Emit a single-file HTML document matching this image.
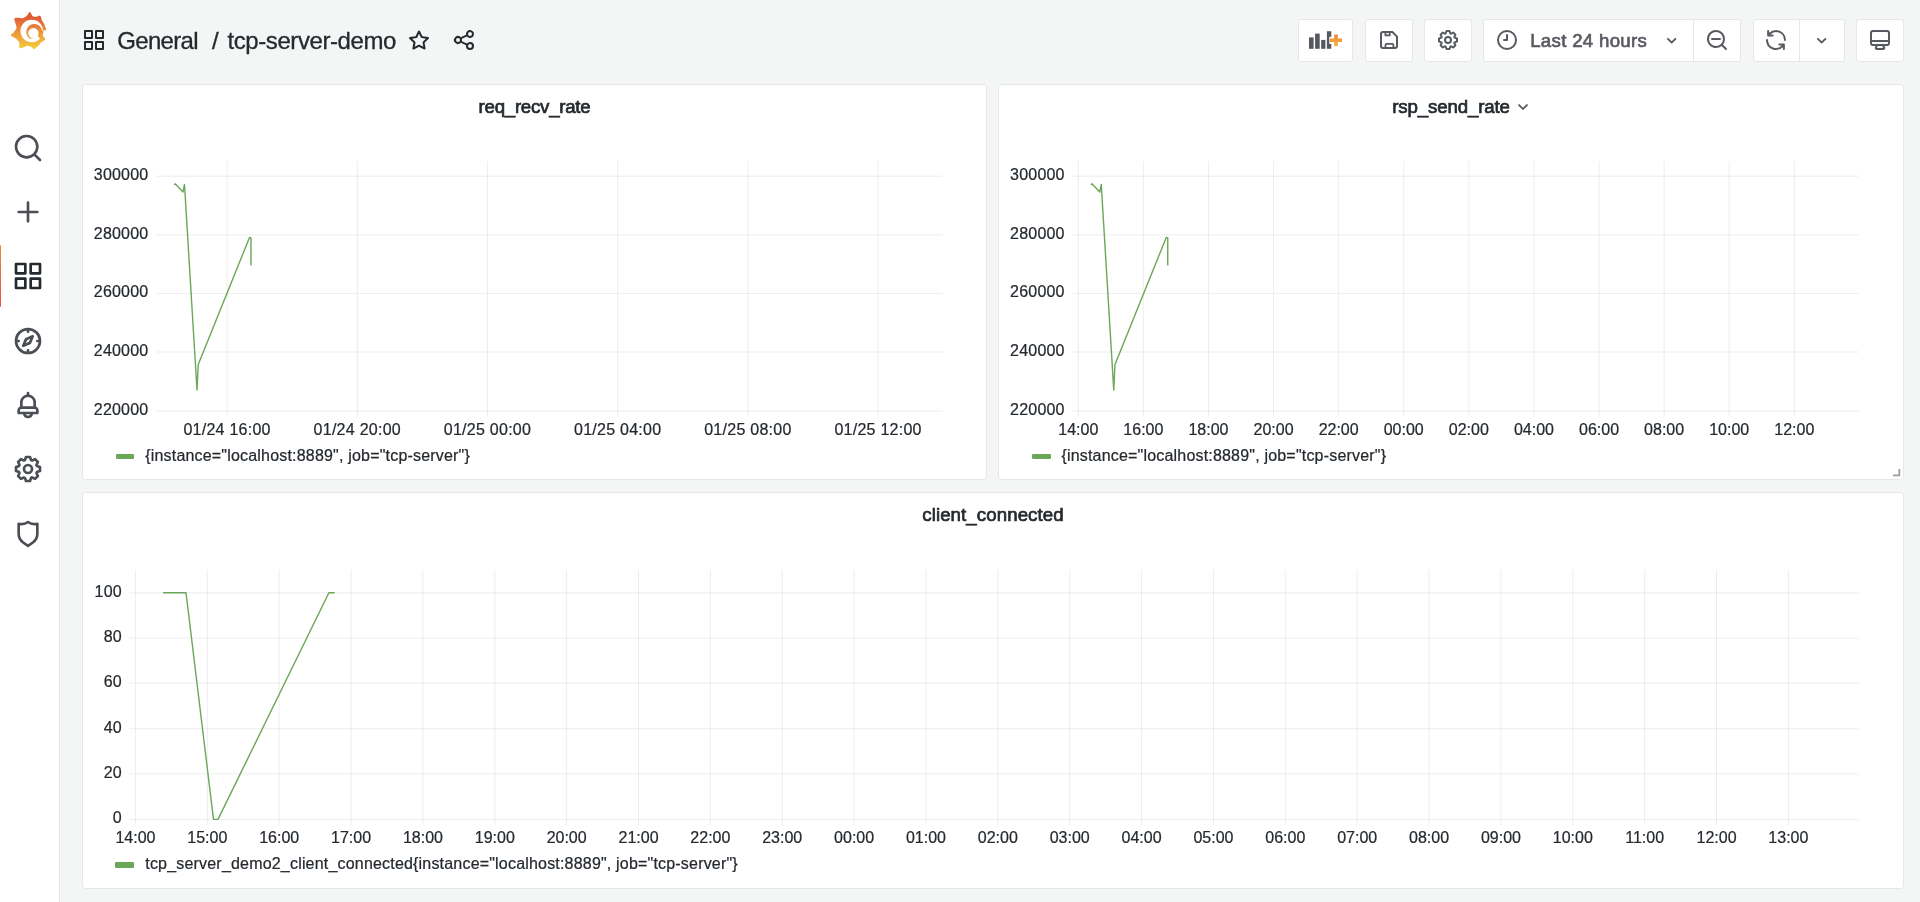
<!DOCTYPE html>
<html lang="en"><head><meta charset="utf-8"><title>tcp-server-demo - Grafana</title>
<style>
*{box-sizing:border-box;margin:0;padding:0}
html,body{width:1920px;height:902px;overflow:hidden}
body{background:#f4f5f5;font-family:"Liberation Sans",Arial,sans-serif;color:#24292e;position:relative}
.ic{position:absolute;display:block;overflow:visible}
#side{position:absolute;left:0;top:0;width:60px;height:902px;background:#fff;border-right:1px solid #e4e5e7}
#side .active{position:absolute;left:-1px;top:244.8px;width:2.3px;height:62.3px;border-radius:1.5px;background:linear-gradient(#f2873b,#e8504c)}
#nav{position:absolute;left:60px;top:0;right:0;height:81px;will-change:transform}
.t{position:absolute;white-space:pre;line-height:1}
.title{font-size:24px;top:28.6px;-webkit-text-stroke:0.3px #24292e}
.btn{position:absolute;top:19px;height:42.6px;background:#fff;border:1px solid #e5e6e8;border-radius:3px}
.panel{position:absolute;will-change:transform;background:#fff;border:1px solid #e5e6e8;border-radius:3.5px}
.panel svg.chart{position:absolute;left:-1px;top:-1px;overflow:visible}
.ptitle{position:absolute;left:0;right:0;top:10.5px;text-align:center;font-size:18.67px;line-height:21px;white-space:pre;letter-spacing:-0.25px;-webkit-text-stroke:0.7px #24292e}
.legend{position:absolute;font-size:16px;line-height:18px;white-space:pre;letter-spacing:0.19px;-webkit-text-stroke:0.22px #24292e}
.sw{position:absolute;width:18.7px;height:5.3px;border-radius:1.3px;background:#6ba659}
svg text{font-family:"Liberation Sans",Arial,sans-serif;font-size:16px;fill:#24292e;stroke:#24292e;stroke-width:0.22px}
</style></head><body>

<div id="side">
<svg class="ic" style="left:0;top:0" width="60" height="60" viewBox="0 0 900 900"><defs><linearGradient id="lg" gradientUnits="userSpaceOnUse" x1="0" y1="180" x2="0" y2="736"><stop offset="0.15" stop-color="#e05c36"/><stop offset="0.55" stop-color="#ec963b"/><stop offset="1" stop-color="#f6cd3d"/></linearGradient></defs>
<path fill="url(#lg)" d="M445 180C463 176 457 192 472 212C487 232 473 234 495 245C517 256 516 252 545 250C574 248 571 234 592 238C613 242 606 243 616 262C626 281 614 275 626 300C638 325 639 315 655 345C671 375 668 369 678 400C688 431 700 428 690 447C680 466 659 446 644 462C629 478 640 475 641 500C642 525 638 520 648 545C658 570 674 565 676 585C678 605 674 596 655 612C636 628 632 622 612 640C592 658 606 653 590 672C574 691 584 683 560 702C536 721 534 733 510 736C486 739 501 725 480 712C459 699 464 699 440 692C416 685 427 684 400 690C373 696 380 702 350 712C320 722 318 729 300 722C282 715 292 712 289 690C286 668 296 673 290 650C284 627 288 635 270 612C252 589 262 598 230 572C198 546 174 552 165 527C156 502 178 516 200 490C222 464 224 467 238 440C252 413 249 433 245 400C241 367 234 367 226 330C218 293 207 297 220 278C233 259 237 270 270 268C303 266 296 277 330 272C364 267 360 264 385 250C410 236 394 246 412 225C430 204 427 184 445 180Z"/>
<circle cx="476" cy="466" r="169" fill="#fff"/>
<path fill="url(#lg)" d="M450 583A121 121 0 1 1 601 564L563 544A78 78 0 1 0 521 573Z"/>
<path fill="none" stroke="url(#lg)" stroke-width="26" d="M638 458A162 162 0 0 1 594 576"/></svg>
<div class="active"></div>
<svg class="ic" style="left:12.20px;top:131.50px" width="32" height="32" viewBox="0 0 24 24" fill="#4b4e55"><path d="M21.71,20.29,18,16.61A9,9,0,1,0,16.61,18l3.68,3.68a1,1,0,0,0,1.42,0A1,1,0,0,0,21.71,20.29ZM11,18a7,7,0,1,1,7-7A7,7,0,0,1,11,18Z"/></svg>
<svg class="ic" style="left:12.20px;top:196.00px" width="32" height="32" viewBox="0 0 24 24" fill="#4b4e55"><path d="M19,11H13V5a1,1,0,0,0-2,0v6H5a1,1,0,0,0,0,2h6v6a1,1,0,0,0,2,0V13h6a1,1,0,0,0,0-2Z"/></svg>
<svg class="ic" style="left:12.20px;top:260.20px" width="32" height="32" viewBox="0 0 24 24" fill="#24292e"><path d="M10,13H3a1,1,0,0,0-1,1v7a1,1,0,0,0,1,1h7a1,1,0,0,0,1-1V14A1,1,0,0,0,10,13ZM9,20H4V15H9ZM21,2H14a1,1,0,0,0-1,1v7a1,1,0,0,0,1,1h7a1,1,0,0,0,1-1V3A1,1,0,0,0,21,2ZM20,9H15V4h5Zm1,4H14a1,1,0,0,0-1,1v7a1,1,0,0,0,1,1h7a1,1,0,0,0,1-1V14A1,1,0,0,0,21,13Zm-1,7H15V15h5ZM10,2H3A1,1,0,0,0,2,3v7a1,1,0,0,0,1,1h7a1,1,0,0,0,1-1V3A1,1,0,0,0,10,2ZM9,9H4V4H9Z"/></svg>
<svg class="ic" style="left:12.20px;top:324.70px" width="32" height="32" viewBox="0 0 24 24" fill="#4b4e55"><path d="M12,2A10,10,0,1,0,22,12,10,10,0,0,0,12,2Zm1,17.93V19a1,1,0,0,0-2,0v.93A8,8,0,0,1,4.07,13H5a1,1,0,0,0,0-2H4.07A8,8,0,0,1,11,4.07V5a1,1,0,0,0,2,0V4.07A8,8,0,0,1,19.93,11H19a1,1,0,0,0,0,2h.93A8,8,0,0,1,13,19.93ZM15.14,7.55l-5,2.12a1,1,0,0,0-.52.52l-2.12,5a1,1,0,0,0,.21,1.1,1,1,0,0,0,.7.29.93.93,0,0,0,.4-.08l5-2.12a1,1,0,0,0,.52-.52l2.12-5a1,1,0,0,0-1.31-1.31Zm-2.49,5.1-2.28,1,1-2.28,2.28-1Z"/></svg>
<svg class="ic" style="left:12.20px;top:389.00px" width="32" height="32" viewBox="0 0 24 24" fill="#4b4e55"><path d="M18,13.18V10a6,6,0,0,0-5-5.91V3a1,1,0,0,0-2,0V4.09A6,6,0,0,0,6,10v3.18A3,3,0,0,0,4,16v2a1,1,0,0,0,1,1H8.14a4,4,0,0,0,7.72,0H19a1,1,0,0,0,1-1V16A3,3,0,0,0,18,13.18ZM8,10a4,4,0,0,1,8,0v3H8Zm4,10a2,2,0,0,1-1.72-1h3.44A2,2,0,0,1,12,20Zm6-3H6V16a1,1,0,0,1,1-1H17a1,1,0,0,1,1,1Z"/></svg>
<svg class="ic" style="left:12.20px;top:453.30px" width="32" height="32" viewBox="0 0 24 24" fill="#4b4e55"><path d="M21.32,9.55l-1.89-.63.89-1.78A1,1,0,0,0,20.13,6L18,3.87a1,1,0,0,0-1.15-.19l-1.78.89-.63-1.89A1,1,0,0,0,13.5,2h-3a1,1,0,0,0-.95.68L8.92,4.57,7.14,3.68A1,1,0,0,0,6,3.87L3.87,6a1,1,0,0,0-.19,1.15l.89,1.78-1.89.63A1,1,0,0,0,2,10.5v3a1,1,0,0,0,.68.95l1.89.63-.89,1.78A1,1,0,0,0,3.87,18L6,20.13a1,1,0,0,0,1.15.19l1.78-.89.63,1.89a1,1,0,0,0,.95.68h3a1,1,0,0,0,.95-.68l.63-1.89,1.78.89A1,1,0,0,0,18,20.13L20.13,18a1,1,0,0,0,.19-1.15l-.89-1.78,1.89-.63A1,1,0,0,0,22,13.5v-3A1,1,0,0,0,21.32,9.55ZM20,12.78l-1.2.4A2,2,0,0,0,17.64,16l.57,1.14-1.1,1.1L16,17.64a2,2,0,0,0-2.79,1.16l-.4,1.2H11.22l-.4-1.2A2,2,0,0,0,8,17.64l-1.14.57-1.1-1.1L6.36,16A2,2,0,0,0,5.2,13.18L4,12.78V11.22l1.2-.4A2,2,0,0,0,6.36,8L5.79,6.89l1.1-1.1L8,6.36A2,2,0,0,0,10.82,5.2l.4-1.2h1.56l.4,1.2A2,2,0,0,0,16,6.36l1.14-.57,1.1,1.1L17.64,8a2,2,0,0,0,1.16,2.79l1.2.4ZM12,8a4,4,0,1,0,4,4A4,4,0,0,0,12,8Zm0,6a2,2,0,1,1,2-2A2,2,0,0,1,12,14Z"/></svg>
<svg class="ic" style="left:12.20px;top:517.50px" width="32" height="32" viewBox="0 0 24 24" fill="#4b4e55"><path d="M19.63,3.65a1,1,0,0,0-.84-.2,8,8,0,0,1-6.22-1.27,1,1,0,0,0-1.14,0A8,8,0,0,1,5.21,3.45a1,1,0,0,0-.84.2A1,1,0,0,0,4,4.43v7.45a9,9,0,0,0,3.77,7.33l3.65,2.6a1,1,0,0,0,1.16,0l3.65-2.6A9,9,0,0,0,20,11.88V4.43A1,1,0,0,0,19.63,3.65ZM18,11.88a7,7,0,0,1-2.93,5.7L12,19.77,8.93,17.58A7,7,0,0,1,6,11.88V5.58a10,10,0,0,0,6-1.39,10,10,0,0,0,6,1.39Z"/></svg>
</div>
<div id="nav">
<svg class="ic" style="left:22.00px;top:28.10px" width="24" height="24" viewBox="0 0 24 24" fill="#24292e"><path d="M10,13H3a1,1,0,0,0-1,1v7a1,1,0,0,0,1,1h7a1,1,0,0,0,1-1V14A1,1,0,0,0,10,13ZM9,20H4V15H9ZM21,2H14a1,1,0,0,0-1,1v7a1,1,0,0,0,1,1h7a1,1,0,0,0,1-1V3A1,1,0,0,0,21,2ZM20,9H15V4h5Zm1,4H14a1,1,0,0,0-1,1v7a1,1,0,0,0,1,1h7a1,1,0,0,0,1-1V14A1,1,0,0,0,21,13Zm-1,7H15V15h5ZM10,2H3A1,1,0,0,0,2,3v7a1,1,0,0,0,1,1h7a1,1,0,0,0,1-1V3A1,1,0,0,0,10,2ZM9,9H4V4H9Z"/></svg>
<span class="t title" style="left:57.3px;letter-spacing:-0.68px">General</span>
<span class="t title" style="left:151.9px">/</span>
<span class="t title" style="left:167.5px;letter-spacing:-0.42px">tcp-server-demo</span>
<svg class="ic" style="left:346.80px;top:28.30px" width="24" height="24" viewBox="0 0 24 24" fill="#24292e"><path d="M22,9.67A1,1,0,0,0,21.14,9l-5.69-.83L12.9,3a1,1,0,0,0-1.8,0L8.55,8.16,2.86,9a1,1,0,0,0-.81.68,1,1,0,0,0,.25,1l4.13,4-1,5.68A1,1,0,0,0,6.9,21.44L12,18.77l5.1,2.67a.93.93,0,0,0,.46.12,1,1,0,0,0,.59-.19,1,1,0,0,0,.4-1l-1-5.68,4.13-4A1,1,0,0,0,22,9.67Zm-6.15,4a1,1,0,0,0-.29.88l.72,4.2-3.76-2a1.06,1.06,0,0,0-.94,0l-3.76,2,.72-4.2a1,1,0,0,0-.29-.88l-3-3,4.21-.61a1,1,0,0,0,.76-.55L12,5.7l1.88,3.82a1,1,0,0,0,.76.55l4.21.61Z"/></svg>
<svg class="ic" style="left:392.20px;top:28.20px" width="24" height="24" viewBox="0 0 24 24" fill="#24292e"><path d="M18,14a4,4,0,0,0-3.08,1.48l-5.1-2.35a3.64,3.64,0,0,0,0-2.26l5.1-2.35A4,4,0,1,0,14,6a4.17,4.17,0,0,0,.07.71L8.79,9.14a4,4,0,1,0,0,5.72l5.28,2.43A4.17,4.17,0,0,0,14,18a4,4,0,1,0,4-4ZM18,4a2,2,0,1,1-2,2A2,2,0,0,1,18,4ZM6,14a2,2,0,1,1,2-2A2,2,0,0,1,6,14Zm12,6a2,2,0,1,1,2-2A2,2,0,0,1,18,20Z"/></svg>
<div class="btn" style="left:1238.0px;width:55.4px"></div>
<div class="btn" style="left:1305.0px;width:47.6px"></div>
<div class="btn" style="left:1364.0px;width:47.7px"></div>
<div class="btn" style="left:1423.0px;width:258.1px"></div>
<div class="btn" style="left:1692.7px;width:91.9px"></div>
<div class="btn" style="left:1796.0px;width:47.7px"></div>
<div style="position:absolute;left:1633.3px;top:20px;width:1px;height:40.6px;background:#e5e6e8"></div>
<div style="position:absolute;left:1739.3px;top:20px;width:1px;height:40.6px;background:#e5e6e8"></div>
<svg class="ic" style="left:1249px;top:31px" width="34" height="19" viewBox="0 0 34 19">
<rect x="0" y="6.4" width="4.6" height="11.4" fill="#55585f"/><rect x="6.1" y="2.6" width="4.6" height="15.2" fill="#55585f"/>
<rect x="12.2" y="8.9" width="4.2" height="8.9" fill="#55585f"/><path d="M17.9 0.3h4.4v5.4h-2v7.2h2v4.9h-4.4z" fill="#55585f"/>
<defs><linearGradient id="pg" x1="0" y1="0" x2="0" y2="1"><stop offset="0" stop-color="#f0813a"/><stop offset="1" stop-color="#f5b73a"/></linearGradient></defs>
<path d="M25.2 3.4h3.6v4.2h4.2v3.4h-4.2v4.2h-3.6v-4.2h-4.2v-3.4h4.2z" fill="url(#pg)"/></svg>
<svg class="ic" style="left:1316.80px;top:28.20px" width="24" height="24" viewBox="0 0 24 24"><g fill="none" stroke="#585a61" stroke-width="2" stroke-linejoin="round"><path d="M6 4h9.4L20 8.6V18a2 2 0 0 1-2 2H6a2 2 0 0 1-2-2V6a2 2 0 0 1 2-2z"/><path stroke-width="1.8" d="M8.4 4.4v3h4.3V4.4M8.5 19.6v-2.7a1 1 0 0 1 1-1h5.9a1 1 0 0 1 1 1v2.7"/></g></svg>
<svg class="ic" style="left:1375.70px;top:28.10px" width="24" height="24" viewBox="0 0 24 24" fill="#585a61"><path d="M21.32,9.55l-1.89-.63.89-1.78A1,1,0,0,0,20.13,6L18,3.87a1,1,0,0,0-1.15-.19l-1.78.89-.63-1.89A1,1,0,0,0,13.5,2h-3a1,1,0,0,0-.95.68L8.92,4.57,7.14,3.68A1,1,0,0,0,6,3.87L3.87,6a1,1,0,0,0-.19,1.15l.89,1.78-1.89.63A1,1,0,0,0,2,10.5v3a1,1,0,0,0,.68.95l1.89.63-.89,1.78A1,1,0,0,0,3.87,18L6,20.13a1,1,0,0,0,1.15.19l1.78-.89.63,1.89a1,1,0,0,0,.95.68h3a1,1,0,0,0,.95-.68l.63-1.89,1.78.89A1,1,0,0,0,18,20.13L20.13,18a1,1,0,0,0,.19-1.15l-.89-1.78,1.89-.63A1,1,0,0,0,22,13.5v-3A1,1,0,0,0,21.32,9.55ZM20,12.78l-1.2.4A2,2,0,0,0,17.64,16l.57,1.14-1.1,1.1L16,17.64a2,2,0,0,0-2.79,1.16l-.4,1.2H11.22l-.4-1.2A2,2,0,0,0,8,17.64l-1.14.57-1.1-1.1L6.36,16A2,2,0,0,0,5.2,13.18L4,12.78V11.22l1.2-.4A2,2,0,0,0,6.36,8L5.79,6.89l1.1-1.1L8,6.36A2,2,0,0,0,10.82,5.2l.4-1.2h1.56l.4,1.2A2,2,0,0,0,16,6.36l1.14-.57,1.1,1.1L17.64,8a2,2,0,0,0,1.16,2.79l1.2.4ZM12,8a4,4,0,1,0,4,4A4,4,0,0,0,12,8Zm0,6a2,2,0,1,1,2-2A2,2,0,0,1,12,14Z"/></svg>
<svg class="ic" style="left:1434.70px;top:28.05px" width="24" height="24" viewBox="0 0 24 24" fill="#585a61"><path d="M12,2A10,10,0,1,0,22,12,10,10,0,0,0,12,2Zm0,18a8,8,0,1,1,8-8A8,8,0,0,1,12,20ZM12,6a1,1,0,0,0-1,1v4H9a1,1,0,0,0,0,2h3a1,1,0,0,0,1-1V7A1,1,0,0,0,12,6Z"/></svg>
<span class="t" style="left:1470.2px;top:31.7px;font-size:18.67px;letter-spacing:0.3px;color:#585a61;-webkit-text-stroke:0.65px #585a61">Last 24 hours</span>
<svg class="ic" style="left:1601.15px;top:29.75px" width="21.3" height="21.3" viewBox="0 0 24 24" fill="#585a61"><path d="M17,9.17a1,1,0,0,0-1.41,0L12,12.71,8.46,9.17a1,1,0,0,0-1.41,0,1,1,0,0,0,0,1.42l4.24,4.24a1,1,0,0,0,1.42,0L17,10.59A1,1,0,0,0,17,9.17Z"/></svg>
<svg class="ic" style="left:1645.40px;top:28.10px" width="24" height="24" viewBox="0 0 24 24" fill="#585a61"><path d="M21.71,20.29,18,16.61A9,9,0,1,0,16.61,18l3.68,3.68a1,1,0,0,0,1.42,0A1,1,0,0,0,21.71,20.29ZM11,18a7,7,0,1,1,7-7A7,7,0,0,1,11,18Zm4-8H7a1,1,0,0,0,0,2h8a1,1,0,0,0,0-2Z"/></svg>
<svg class="ic" style="left:1704.30px;top:28.30px" width="24" height="24" viewBox="0 0 24 24" fill="#585a61"><path d="M19.91,15.51H15.38a1,1,0,0,0,0,2h2.4A8,8,0,0,1,4,12a1,1,0,0,0-2,0,10,10,0,0,0,16.88,7.23V21a1,1,0,0,0,2,0V16.5A1,1,0,0,0,19.91,15.51ZM12,2A10,10,0,0,0,5.12,4.77V3a1,1,0,0,0-2,0V7.5a1,1,0,0,0,1,1h4.5a1,1,0,0,0,0-2H6.22A8,8,0,0,1,20,12a1,1,0,0,0,2,0A10,10,0,0,0,12,2Z"/></svg>
<svg class="ic" style="left:1751.45px;top:29.55px" width="21.3" height="21.3" viewBox="0 0 24 24" fill="#585a61"><path d="M17,9.17a1,1,0,0,0-1.41,0L12,12.71,8.46,9.17a1,1,0,0,0-1.41,0,1,1,0,0,0,0,1.42l4.24,4.24a1,1,0,0,0,1.42,0L17,10.59A1,1,0,0,0,17,9.17Z"/></svg>
<svg class="ic" style="left:1807.90px;top:28.10px" width="24" height="24" viewBox="0 0 24 24" fill="#585a61"><path d="M19,2H5A3,3,0,0,0,2,5V15a3,3,0,0,0,3,3H7.64l-.58,1a2,2,0,0,0,0,2,2,2,0,0,0,1.75,1h6.46A2,2,0,0,0,17,21a2,2,0,0,0,0-2l-.59-1H19a3,3,0,0,0,3-3V5A3,3,0,0,0,19,2ZM8.77,20,10,18H14l1.2,2ZM20,15a1,1,0,0,1-1,1H5a1,1,0,0,1-1-1V14H20Zm0-3H4V5A1,1,0,0,1,5,4H19a1,1,0,0,1,1,1Z"/></svg>
</div>
<div class="panel" style="left:82px;top:84px;width:905px;height:396px">
<div class="ptitle" style="letter-spacing:-0.25px">req_recv_rate</div>
<svg class="chart" width="905" height="396" viewBox="82 84 905 396"><g stroke="#1e2832" stroke-opacity="0.085" stroke-width="0.95"><line x1="156.00" y1="176.25" x2="942.30" y2="176.25"/><line x1="156.00" y1="234.80" x2="942.30" y2="234.80"/><line x1="156.00" y1="293.40" x2="942.30" y2="293.40"/><line x1="156.00" y1="352.00" x2="942.30" y2="352.00"/><line x1="156.00" y1="411.00" x2="942.30" y2="411.00"/><line x1="227.10" y1="161.30" x2="227.10" y2="416.50"/><line x1="357.30" y1="161.30" x2="357.30" y2="416.50"/><line x1="487.50" y1="161.30" x2="487.50" y2="416.50"/><line x1="617.70" y1="161.30" x2="617.70" y2="416.50"/><line x1="747.90" y1="161.30" x2="747.90" y2="416.50"/><line x1="878.10" y1="161.30" x2="878.10" y2="416.50"/></g><g text-anchor="end" letter-spacing="0.2"><text x="148.40" y="180.05">300000</text><text x="148.40" y="238.60">280000</text><text x="148.40" y="297.20">260000</text><text x="148.40" y="355.80">240000</text><text x="148.40" y="414.80">220000</text></g><g text-anchor="middle" letter-spacing="0.26"><text x="227.10" y="434.90">01/24 16:00</text><text x="357.30" y="434.90">01/24 20:00</text><text x="487.50" y="434.90">01/25 00:00</text><text x="617.70" y="434.90">01/25 04:00</text><text x="747.90" y="434.90">01/25 08:00</text><text x="878.10" y="434.90">01/25 12:00</text></g><polyline points="174.30,185.00 175.20,183.80 183.00,192.00 184.50,184.50 197.00,390.00 198.25,364.50 249.50,237.50 251.00,238.00 251.00,265.50" fill="none" stroke="#6ba659" stroke-width="1.4" stroke-linejoin="round"/></svg>
<div class="sw" style="left:32.50px;top:368.90px"></div>
<div class="legend" style="left:62.20px;top:361.80px">{instance="localhost:8889", job="tcp-server"}</div>

</div>
<div class="panel" style="left:998px;top:84px;width:906px;height:396px">
<div class="ptitle" style="letter-spacing:-0.12px">rsp_send_rate</div><svg class="ic" style="left:512.90px;top:10.90px" width="22" height="22" viewBox="0 0 24 24" fill="#54575d"><path d="M17,9.17a1,1,0,0,0-1.41,0L12,12.71,8.46,9.17a1,1,0,0,0-1.41,0,1,1,0,0,0,0,1.42l4.24,4.24a1,1,0,0,0,1.42,0L17,10.59A1,1,0,0,0,17,9.17Z"/></svg>
<svg class="chart" width="906" height="396" viewBox="998 84 906 396"><g stroke="#1e2832" stroke-opacity="0.085" stroke-width="0.95"><line x1="1072.30" y1="176.25" x2="1858.60" y2="176.25"/><line x1="1072.30" y1="234.80" x2="1858.60" y2="234.80"/><line x1="1072.30" y1="293.40" x2="1858.60" y2="293.40"/><line x1="1072.30" y1="352.00" x2="1858.60" y2="352.00"/><line x1="1072.30" y1="411.00" x2="1858.60" y2="411.00"/><line x1="1078.30" y1="161.30" x2="1078.30" y2="416.50"/><line x1="1143.39" y1="161.30" x2="1143.39" y2="416.50"/><line x1="1208.48" y1="161.30" x2="1208.48" y2="416.50"/><line x1="1273.57" y1="161.30" x2="1273.57" y2="416.50"/><line x1="1338.66" y1="161.30" x2="1338.66" y2="416.50"/><line x1="1403.75" y1="161.30" x2="1403.75" y2="416.50"/><line x1="1468.84" y1="161.30" x2="1468.84" y2="416.50"/><line x1="1533.93" y1="161.30" x2="1533.93" y2="416.50"/><line x1="1599.02" y1="161.30" x2="1599.02" y2="416.50"/><line x1="1664.11" y1="161.30" x2="1664.11" y2="416.50"/><line x1="1729.20" y1="161.30" x2="1729.20" y2="416.50"/><line x1="1794.29" y1="161.30" x2="1794.29" y2="416.50"/></g><g text-anchor="end" letter-spacing="0.2"><text x="1064.70" y="180.05">300000</text><text x="1064.70" y="238.60">280000</text><text x="1064.70" y="297.20">260000</text><text x="1064.70" y="355.80">240000</text><text x="1064.70" y="414.80">220000</text></g><g text-anchor="middle" letter-spacing="0"><text x="1078.30" y="434.90">14:00</text><text x="1143.39" y="434.90">16:00</text><text x="1208.48" y="434.90">18:00</text><text x="1273.57" y="434.90">20:00</text><text x="1338.66" y="434.90">22:00</text><text x="1403.75" y="434.90">00:00</text><text x="1468.84" y="434.90">02:00</text><text x="1533.93" y="434.90">04:00</text><text x="1599.02" y="434.90">06:00</text><text x="1664.11" y="434.90">08:00</text><text x="1729.20" y="434.90">10:00</text><text x="1794.29" y="434.90">12:00</text></g><polyline points="1091.05,185.00 1091.95,183.80 1099.75,192.00 1101.25,184.50 1113.75,390.00 1115.00,364.50 1166.25,237.50 1167.75,238.00 1167.75,265.50" fill="none" stroke="#6ba659" stroke-width="1.4" stroke-linejoin="round"/></svg>
<div class="sw" style="left:33.00px;top:368.90px"></div>
<div class="legend" style="left:62.40px;top:361.80px">{instance="localhost:8889", job="tcp-server"}</div>
<svg class="ic" style="left:892.5px;top:382.5px" width="9" height="9" viewBox="0 0 9 9"><path d="M7.3 1v6.3H1" fill="none" stroke="#9a9da3" stroke-width="1.8"/></svg>
</div>
<div class="panel" style="left:82px;top:491.5px;width:1822px;height:396.5px">
<div class="ptitle" style="letter-spacing:0.09px">client_connected</div>
<svg class="chart" width="1822" height="396.5" viewBox="82 491.5 1822 396.5"><g stroke="#1e2832" stroke-opacity="0.085" stroke-width="0.95"><line x1="129.45" y1="592.30" x2="1858.60" y2="592.30"/><line x1="129.45" y1="637.50" x2="1858.60" y2="637.50"/><line x1="129.45" y1="682.60" x2="1858.60" y2="682.60"/><line x1="129.45" y1="728.20" x2="1858.60" y2="728.20"/><line x1="129.45" y1="773.40" x2="1858.60" y2="773.40"/><line x1="129.45" y1="819.00" x2="1858.60" y2="819.00"/><line x1="135.45" y1="569.20" x2="135.45" y2="824.50"/><line x1="207.32" y1="569.20" x2="207.32" y2="824.50"/><line x1="279.18" y1="569.20" x2="279.18" y2="824.50"/><line x1="351.05" y1="569.20" x2="351.05" y2="824.50"/><line x1="422.92" y1="569.20" x2="422.92" y2="824.50"/><line x1="494.79" y1="569.20" x2="494.79" y2="824.50"/><line x1="566.65" y1="569.20" x2="566.65" y2="824.50"/><line x1="638.52" y1="569.20" x2="638.52" y2="824.50"/><line x1="710.39" y1="569.20" x2="710.39" y2="824.50"/><line x1="782.25" y1="569.20" x2="782.25" y2="824.50"/><line x1="854.12" y1="569.20" x2="854.12" y2="824.50"/><line x1="925.99" y1="569.20" x2="925.99" y2="824.50"/><line x1="997.85" y1="569.20" x2="997.85" y2="824.50"/><line x1="1069.72" y1="569.20" x2="1069.72" y2="824.50"/><line x1="1141.59" y1="569.20" x2="1141.59" y2="824.50"/><line x1="1213.46" y1="569.20" x2="1213.46" y2="824.50"/><line x1="1285.32" y1="569.20" x2="1285.32" y2="824.50"/><line x1="1357.19" y1="569.20" x2="1357.19" y2="824.50"/><line x1="1429.06" y1="569.20" x2="1429.06" y2="824.50"/><line x1="1500.92" y1="569.20" x2="1500.92" y2="824.50"/><line x1="1572.79" y1="569.20" x2="1572.79" y2="824.50"/><line x1="1644.66" y1="569.20" x2="1644.66" y2="824.50"/><line x1="1716.52" y1="569.20" x2="1716.52" y2="824.50"/><line x1="1788.39" y1="569.20" x2="1788.39" y2="824.50"/></g><g text-anchor="end" letter-spacing="0.2"><text x="121.85" y="596.10">100</text><text x="121.85" y="641.30">80</text><text x="121.85" y="686.40">60</text><text x="121.85" y="732.00">40</text><text x="121.85" y="777.20">20</text><text x="121.85" y="822.80">0</text></g><g text-anchor="middle" letter-spacing="0"><text x="135.45" y="842.90">14:00</text><text x="207.32" y="842.90">15:00</text><text x="279.18" y="842.90">16:00</text><text x="351.05" y="842.90">17:00</text><text x="422.92" y="842.90">18:00</text><text x="494.79" y="842.90">19:00</text><text x="566.65" y="842.90">20:00</text><text x="638.52" y="842.90">21:00</text><text x="710.39" y="842.90">22:00</text><text x="782.25" y="842.90">23:00</text><text x="854.12" y="842.90">00:00</text><text x="925.99" y="842.90">01:00</text><text x="997.85" y="842.90">02:00</text><text x="1069.72" y="842.90">03:00</text><text x="1141.59" y="842.90">04:00</text><text x="1213.46" y="842.90">05:00</text><text x="1285.32" y="842.90">06:00</text><text x="1357.19" y="842.90">07:00</text><text x="1429.06" y="842.90">08:00</text><text x="1500.92" y="842.90">09:00</text><text x="1572.79" y="842.90">10:00</text><text x="1644.66" y="842.90">11:00</text><text x="1716.52" y="842.90">12:00</text><text x="1788.39" y="842.90">13:00</text></g><polyline points="163.10,592.20 186.00,592.20 213.50,818.90 218.00,818.90 328.90,592.20 334.70,592.20" fill="none" stroke="#6ba659" stroke-width="1.4" stroke-linejoin="round"/></svg>
<div class="sw" style="left:32.40px;top:369.40px"></div>
<div class="legend" style="left:62.30px;top:362.30px">tcp_server_demo2_client_connected{instance="localhost:8889", job="tcp-server"}</div>

</div>
</body></html>
